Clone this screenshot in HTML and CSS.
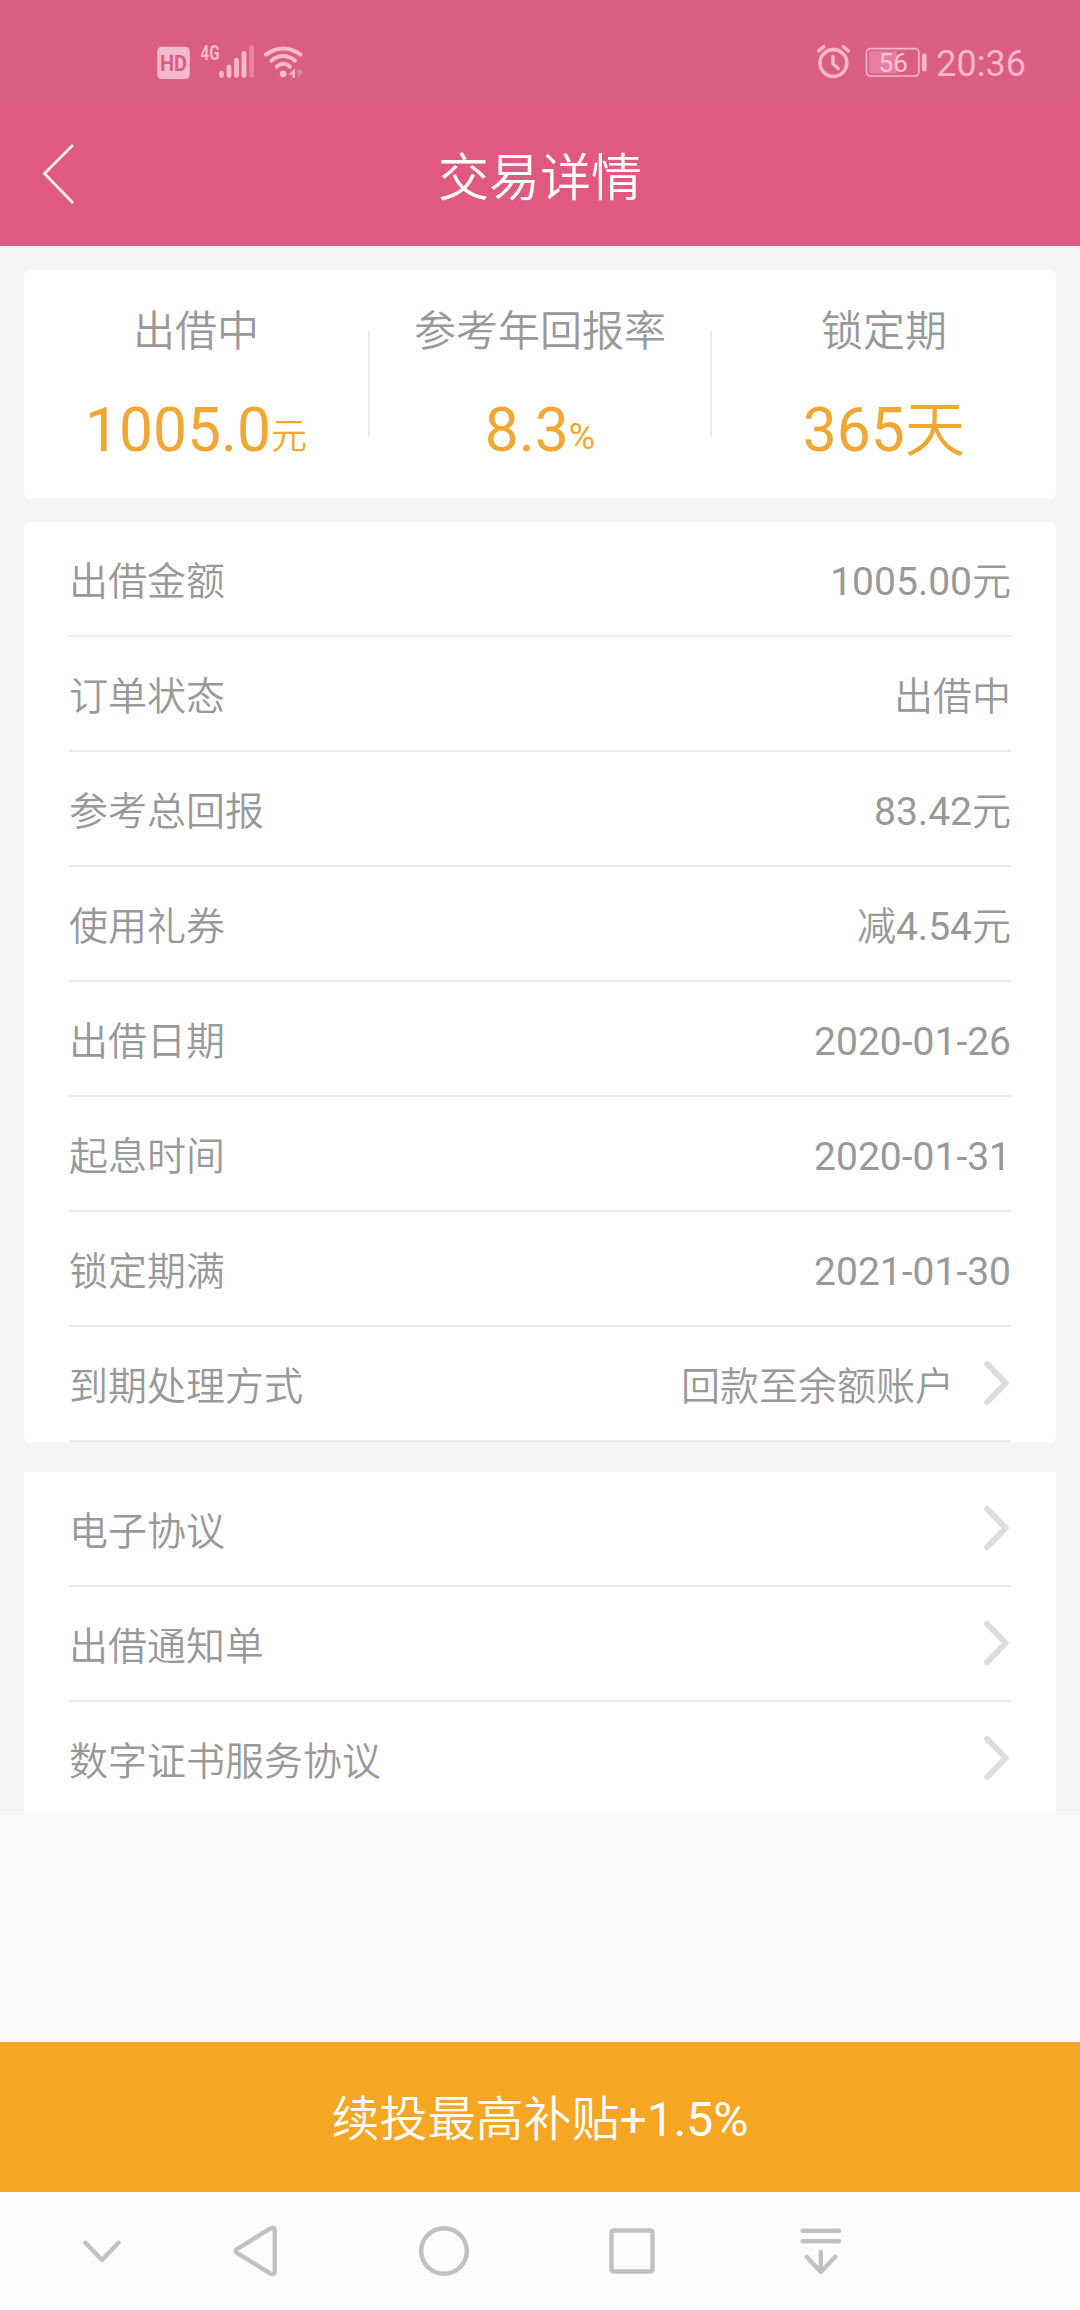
FILE: index.html
```html
<!DOCTYPE html>
<html lang="zh-CN">
<head>
    <meta charset="UTF-8">
    <meta name="viewport" content="width=device-width, initial-scale=1.0">
    <title>交易详情</title>
    <link rel="stylesheet" href="styles.css">
</head>
<body>
    <!-- Status bar -->
    <div class="status-bar">
        <svg class="status-left" width="150" height="40" viewBox="155 42 150 40">
            <rect x="157.3" y="46.7" width="32.5" height="32.3" rx="4.5" fill="#f5b9cc"/>
            <text class="hd" x="160" y="70.5" textLength="27" lengthAdjust="spacingAndGlyphs">HD</text>
            <text class="net" x="200.5" y="60" textLength="19" lengthAdjust="spacingAndGlyphs">4G</text>
            <g stroke="#f8b8cd" stroke-width="4.8" stroke-linecap="round">
                <path d="M221.5 73.2V75.6M229 67V75.6M236.5 60.2V75.6M244 53.4V75.6"/>
                <path d="M251.6 47.4V75.6" opacity=".4"/>
            </g>
            <g fill="none" stroke="#f8b8cd" stroke-width="4" stroke-linecap="round">
                <path d="M266 54.5Q283.3 42.5 300.5 54.5"/>
                <path d="M271.3 60.6Q283.3 51.5 295 60.6"/>
                <path d="M276.8 66.6Q283.3 61 290 66.6"/>
            </g>
            <circle cx="283.2" cy="73.8" r="3.4" fill="#f8b8cd"/>
            <path d="M288.5 74.5L295 68.5V78H292.5V74.8Z" fill="#f8b8cd"/>
            <path d="M297.5 69L303.5 72L300 76L297.5 78Z" fill="#f8b8cd" opacity=".4"/>
        </svg>
        <div class="status-right">
            <svg width="36" height="36" viewBox="815 44 36 36" fill="none" stroke="#fbb5cc" stroke-linecap="round" stroke-linejoin="round">
                <circle cx="833.4" cy="63" r="13.4" stroke-width="3.6"/>
                <path d="M833 56.5V63.8L838.2 68.6" stroke-width="3.4"/>
                <path d="M818.6 51L823.6 46.6M843.4 46.6L848.4 51" stroke-width="3.4"/>
            </svg>
            <svg class="battery" width="64" height="32" viewBox="864 45 64 32">
                <rect x="866.5" y="47.6" width="52.4" height="27.4" rx="4" fill="none" stroke="#fbb5cc" stroke-width="1.7"/>
                <rect x="869" y="50.3" width="28" height="22" fill="#fbb5cc" opacity=".4"/>
                <rect x="922" y="52.5" width="4.6" height="18" rx="2" fill="#fbb5cc"/>
                <text class="level" x="878.6" y="70.8">56</text>
            </svg>
            <span class="clock">20:36</span>
        </div>
    </div>

    <!-- Header -->
    <div class="header">
        <svg class="back" width="34" height="64" viewBox="0 0 34 64">
            <path d="M31 3L2.5 31.5L31 61" fill="none" stroke="#fff0f5" stroke-width="2.8"/>
        </svg>
        <h1>交易详情</h1>
    </div>

    <div class="content">
        <div class="summary">
            <div class="summary-item">
                <div class="summary-label">出借中</div>
                <div class="summary-value">1005.0<small>元</small></div>
            </div>
            <div class="summary-item">
                <div class="summary-label">参考年回报率</div>
                <div class="summary-value">8.3<small>%</small></div>
            </div>
            <div class="summary-item">
                <div class="summary-label">锁定期</div>
                <div class="summary-value">365天</div>
            </div>
        </div>

        <div class="list details">
            <div class="row"><span>出借金额</span><span>1005.00元</span></div>
            <div class="row"><span>订单状态</span><span>出借中</span></div>
            <div class="row"><span>参考总回报</span><span>83.42元</span></div>
            <div class="row"><span>使用礼券</span><span>减4.54元</span></div>
            <div class="row"><span>出借日期</span><span>2020-01-26</span></div>
            <div class="row"><span>起息时间</span><span>2020-01-31</span></div>
            <div class="row"><span>锁定期满</span><span>2021-01-30</span></div>
            <div class="row">
                <span>到期处理方式</span>
                <div class="link-value">
                    <span>回款至余额账户</span>
                    <svg class="arrow" width="28" height="48" viewBox="0 0 28 48"><path d="M4.2 5L22.8 24L4.2 43"/></svg>
                </div>
            </div>
        </div>

        <div class="list agreements">
            <div class="row"><span>电子协议</span><svg class="arrow" width="28" height="48" viewBox="0 0 28 48"><path d="M4.2 5L22.8 24L4.2 43"/></svg></div>
            <div class="row"><span>出借通知单</span><svg class="arrow" width="28" height="48" viewBox="0 0 28 48"><path d="M4.2 5L22.8 24L4.2 43"/></svg></div>
            <div class="row"><span>数字证书服务协议</span><svg class="arrow" width="28" height="48" viewBox="0 0 28 48"><path d="M4.2 5L22.8 24L4.2 43"/></svg></div>
        </div>
    </div>

    <button class="renew">续投最高补贴+1.5%</button>

    <!-- System navigation -->
    <div class="nav-bar">
        <svg viewBox="0 0 60 60"><path d="M13.3 21.8L30 39L46.6 21.8"/></svg>
        <svg viewBox="0 0 60 60"><path d="M10.8 28.2L45 7.2Q48.8 5.8 48.8 10V50Q48.8 54.2 45 52.8L10.8 31.8Q8.8 30 10.8 28.2Z"/></svg>
        <svg viewBox="0 0 60 60"><circle cx="30" cy="30" r="22.8"/></svg>
        <svg viewBox="0 0 60 60"><rect x="9.5" y="9.5" width="41" height="41" rx="2"/></svg>
        <svg viewBox="0 0 60 60"><path d="M12.5 9.7H49M12.5 20.2H49M30.8 31V51M16.6 35.8L30.8 51L45.3 35.8"/></svg>
    </div>
</body>
</html>
```

FILE: styles.css
```css
* {
    box-sizing: border-box;
}

body {
    margin: 0;
    width: 1080px;
    height: 2310px;
    display: flex;
    flex-direction: column;
    background: #fafafa;
    color: #999;
    font-family: Roboto, "Noto Sans CJK SC DemiLight", "Noto Sans CJK SC", sans-serif;
}

svg {
    display: block;
}

/* Status bar */
.status-bar {
    height: 102px;
    padding: 22px 54px 0 155px;
    display: flex;
    justify-content: space-between;
    align-items: center;
    background: #da5d82;
}

.status-right {
    display: flex;
    align-items: center;
}

.hd {
    font-size: 22px;
    font-weight: 700;
    fill: #da5d82;
}

.net {
    font-size: 21px;
    font-weight: 700;
    fill: #f8b8cd;
}

.battery {
    margin: 0 8px 0 13px;
}

.level {
    font-size: 26px;
    fill: #fdc6d8;
}

.clock {
    padding-top: 3px;
    font-size: 36px;
    line-height: 40px;
    color: #fbb5cc;
}

/* Header */
.header {
    height: 144px;
    display: grid;
    grid-template-columns: 120px 1fr 120px;
    align-items: center;
    background: #df5980;
    color: #fff;
}

.back {
    margin-left: 42px;
}

.header h1 {
    margin: 0;
    padding-top: 9px;
    font-size: 51px;
    font-weight: 400;
    line-height: 60px;
    text-align: center;
}

/* Content */
.content {
    height: 1569px;
    padding: 24px 24px 0;
    background: #f4f4f4;
}

.summary {
    height: 228px;
    display: grid;
    grid-template-columns: repeat(3, 1fr);
    background: #fff;
    border-radius: 6px;
}

.summary-item {
    padding-top: 32px;
    text-align: center;
}

.summary-item:nth-child(2) {
    background:
        linear-gradient(#ebebeb, #ebebeb) no-repeat left 61px / 2px 105px,
        linear-gradient(#ebebeb, #ebebeb) no-repeat right 61px / 2px 105px;
}

.summary-label {
    font-size: 42px;
    line-height: 60px;
}

.summary-value {
    margin-top: 33px;
    font-size: 60.5px;
    line-height: 72px;
    color: #f0a733;
}

.summary-value small {
    font-size: 36px;
    line-height: 36px;
    vertical-align: 2px;
}

.list {
    padding: 0 45px;
    background: #fff;
}

.details {
    margin-top: 24px;
    border-radius: 6px;
}

.agreements {
    margin-top: 30px;
}

.row {
    height: 115px;
    display: flex;
    justify-content: space-between;
    align-items: center;
    border-bottom: 2px solid #ebebeb;
    font-size: 39px;
    line-height: 60px;
}

.row span {
    padding-top: 6px;
}

.agreements .row:last-child {
    height: 113px;
    border-bottom: 0;
}

.link-value {
    display: flex;
    align-items: center;
    gap: 29px;
}

.arrow {
    margin-bottom: 1px;
    fill: none;
    stroke: #ddd;
    stroke-width: 6;
    stroke-linecap: round;
    stroke-linejoin: round;
}

/* Bottom button */
.renew {
    height: 150px;
    margin-top: 227px;
    padding: 5px 0 0;
    border: 0;
    background: #f5a623;
    color: #fff;
    font-family: inherit;
    font-size: 48px;
    line-height: 60px;
}

/* System navigation */
.nav-bar {
    height: 118px;
    padding-left: 42px;
    display: grid;
    grid-template-columns: 120px repeat(4, 188px);
    justify-items: center;
    align-items: center;
    background: #fcfcfc;
}

.nav-bar svg {
    width: 60px;
    height: 60px;
    fill: none;
    stroke: #c1c1c1;
    stroke-width: 4.4;
    stroke-linecap: round;
    stroke-linejoin: round;
}
```
